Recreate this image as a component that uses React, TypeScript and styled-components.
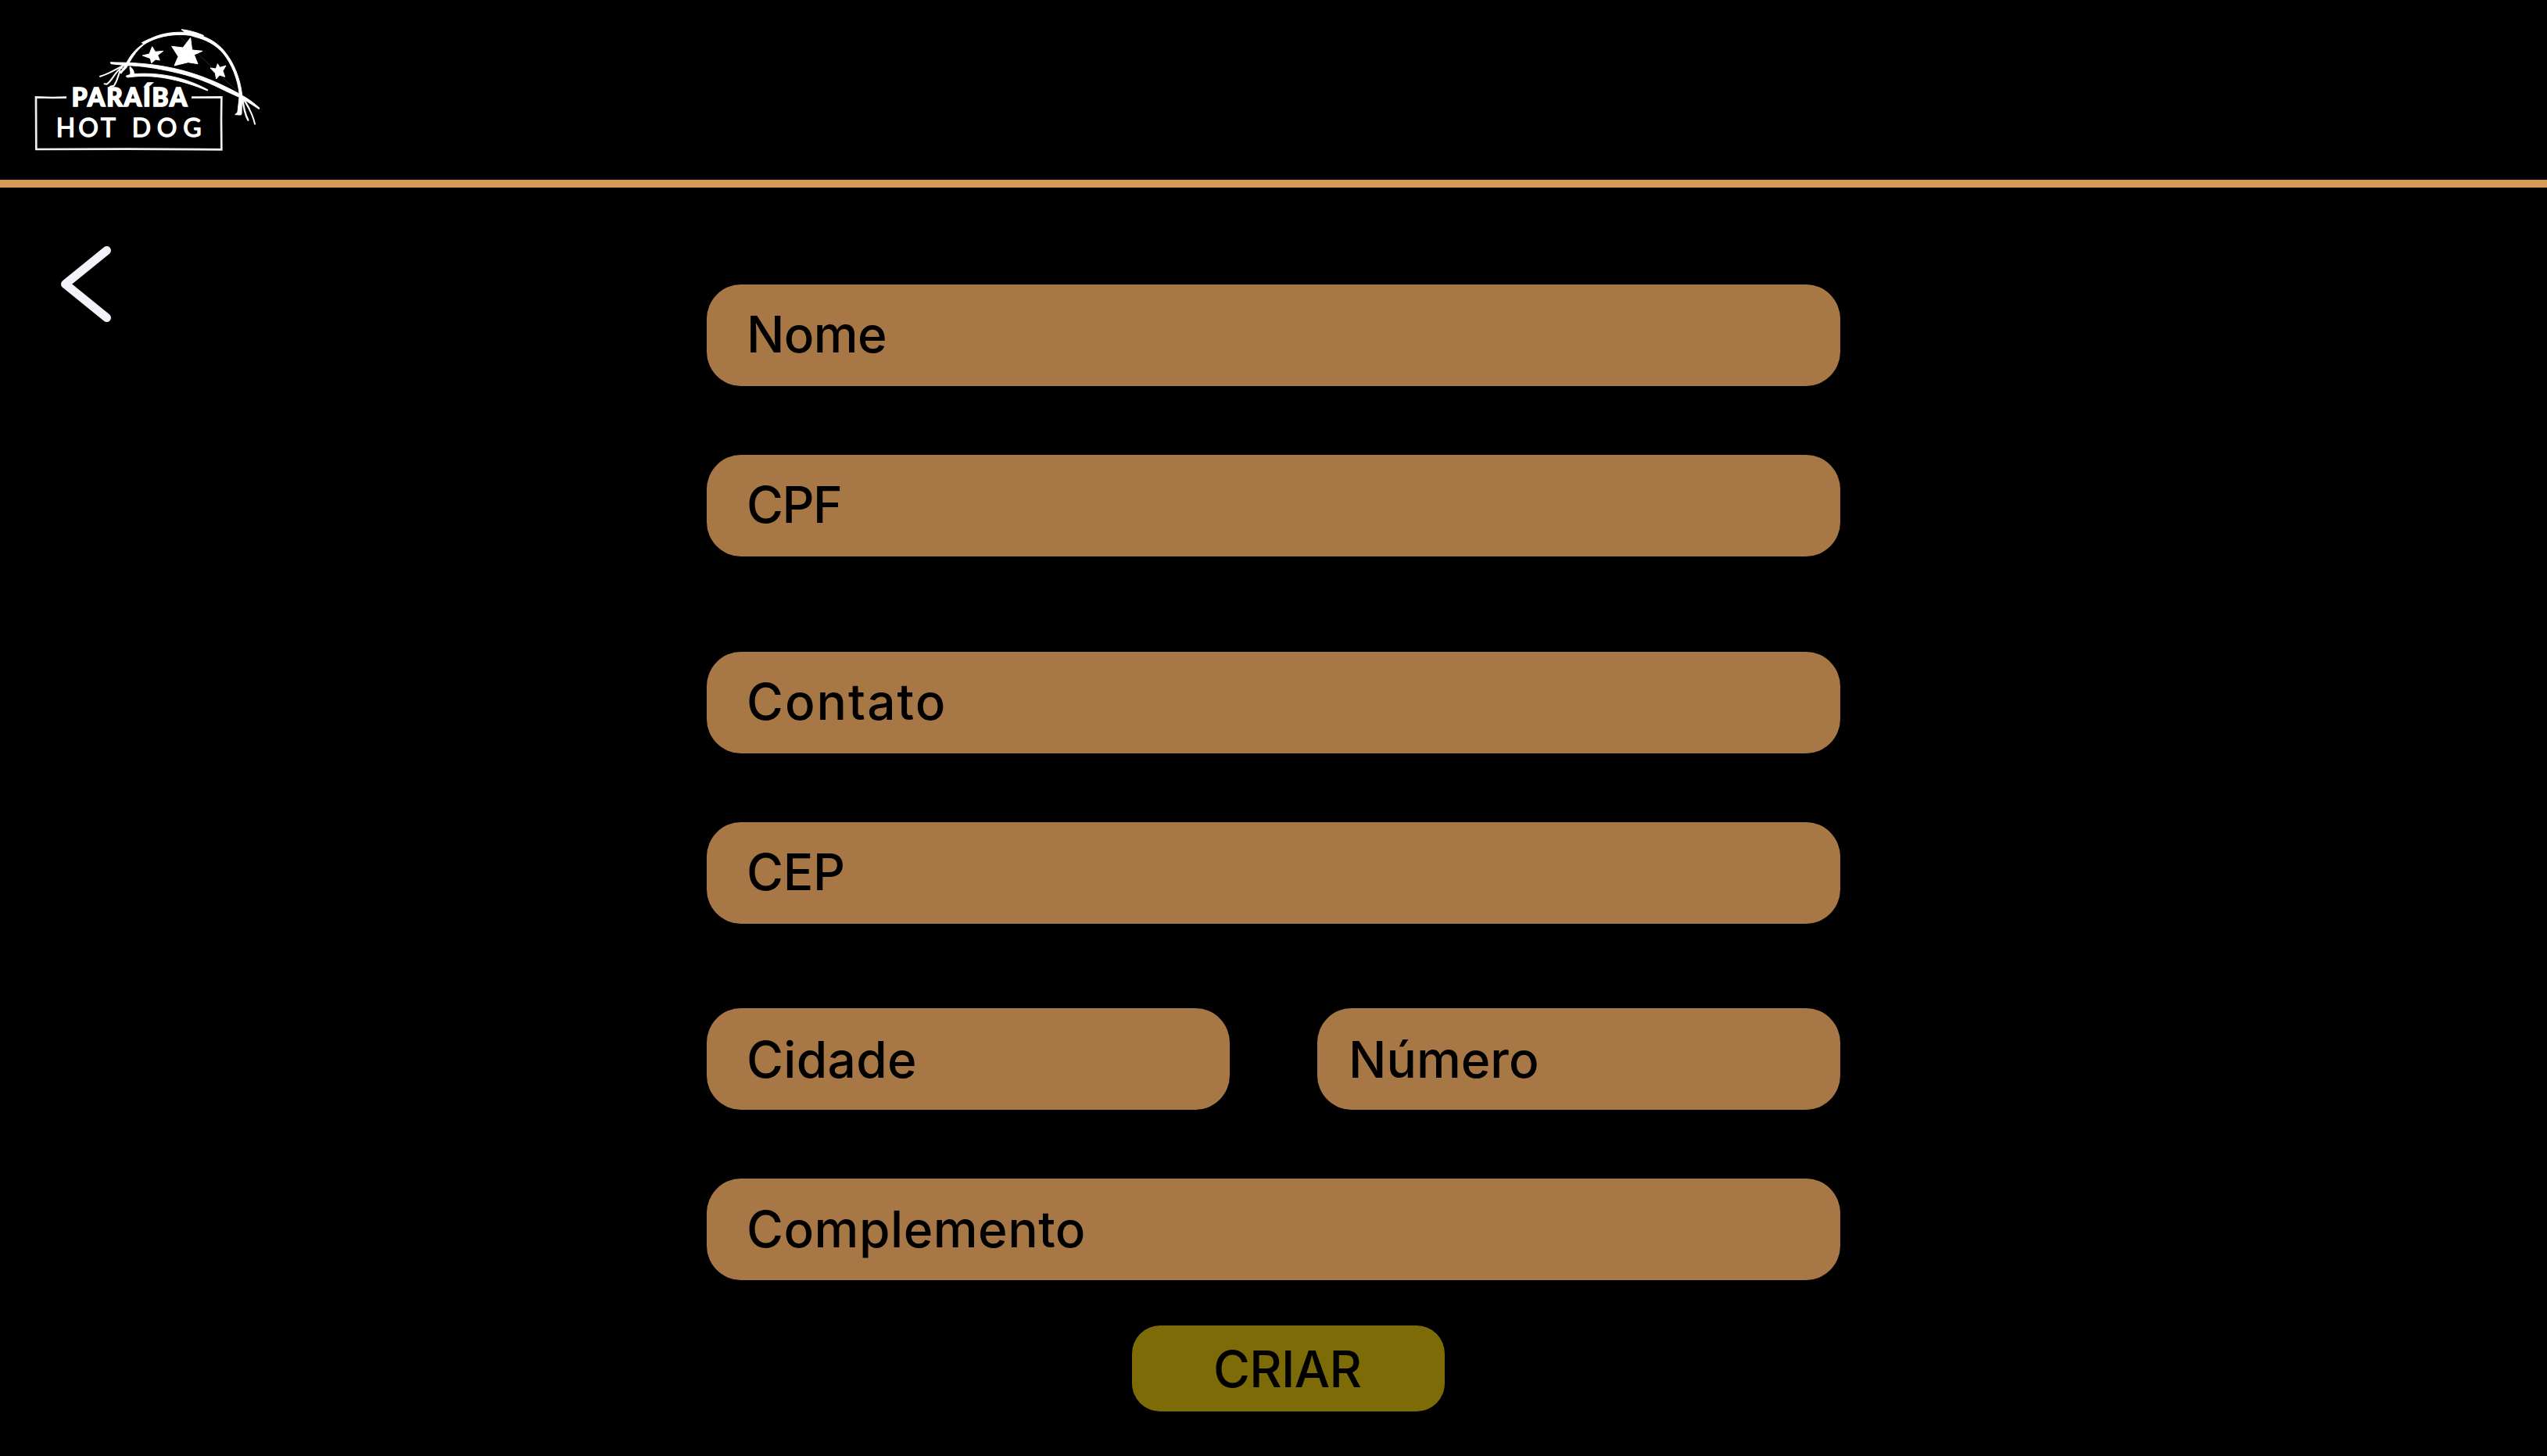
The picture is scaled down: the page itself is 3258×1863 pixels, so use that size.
import React from "react";
import styled, { createGlobalStyle } from "styled-components";

const GlobalStyle = createGlobalStyle`
  *, *::before, *::after { box-sizing: border-box; }
  html, body { margin: 0; background: #000; }
  body { font-family: Inter, "Liberation Sans", sans-serif; }
`;

const Page = styled.div`
  display: flex;
  flex-direction: column;
  width: 3258px;
  height: 1863px;
  background: #000;
  overflow: hidden;
`;

const Header = styled.header`
  flex: none;
  height: 240px;
  padding: 20px 30px 0;
  border-bottom: 10px solid #d69a59;
`;

const LogoArt = styled.svg`
  display: block;
  width: 320px;
  height: 205px;
`;

const Main = styled.main`
  display: grid;
  grid-template-columns: 904px 1450px 904px;
  flex: 1;
`;

const BackButton = styled.button`
  justify-self: start;
  align-self: start;
  margin: 70px 0 0 72px;
  padding: 0;
  border: 0;
  background: none;
  cursor: pointer;

  svg { display: block; }
`;

const Form = styled.form`
  display: flex;
  flex-direction: column;
  padding-top: 124px;
`;

const Row = styled.div<{ $gap: number }>`
  display: flex;
  justify-content: space-between;
  margin-bottom: ${(p) => p.$gap}px;
`;

const Field = styled.label<{ $width?: number; $top: number; $left?: number; $tracking: number }>`
  width: ${(p) => p.$width ?? 1450}px;
  height: 130px;
  padding: ${(p) => p.$top}px 0 0 ${(p) => p.$left ?? 51}px;
  border-radius: 44px;
  background: #a77846;
  color: #000;
  font-size: 64px;
  font-weight: 500;
  line-height: 77px;
  letter-spacing: ${(p) => p.$tracking}px;
  white-space: nowrap;
`;

const SubmitButton = styled.button`
  width: 400px;
  height: 110px;
  margin: 0 0 0 544px;
  padding: 17px 0 16px 104px;
  border: 0;
  border-radius: 36px;
  background: #7d6b07;
  color: #000;
  font-family: inherit;
  font-size: 64px;
  font-weight: 500;
  line-height: 77px;
  letter-spacing: -0.7px;
  text-align: left;
  cursor: pointer;
`;

function Logo() {
  return (
    <LogoArt viewBox="0 0 960 615" role="img" aria-label="Paraíba Hot Dog">
      <g fill="none" stroke="#fff">
        <path d="M165 314 L110 315 L48 313 L49 513 L400 512 L760 514 L759 400 L760 313 L645 314" stroke="#f0f0f0" strokeWidth="8" />
        <path d="M593 73 L830 300" stroke="#2b2b2b" strokeWidth="3" />
      </g>
      <g fill="#fff" stroke="#fff" strokeWidth="3">
        <path d="M374 216 C385 203 391 190 398 177 C415 145 437 122 462 108 L454 104 C469 96 480 91 490 87 C528 69 570 62 620 64 L606 53 C634 56 664 64 691 76 L690 80 C721 91 748 110 768 133 C807 178 832 242 839 305 L837 376 L835 381 L812 380 L822 371 L829 304 C823 246 800 185 765 143 C743 117 710 97 674 86 L640 76 C585 68 525 78 483 99 C451 114 427 143 405 182 C399 195 391 210 374 216 Z" />
        <path d="M334 179 L357 180 C445 180 530 190 605 209 C693 232 770 267 842 308 C862 319 883 334 906 355 L904 359 C885 346 862 332 838 317 C811 306 784 293 755 279 C700 251 640 230 575 216 C508 201 450 192 393 191 L336 185 Z" />
        <path d="M409 195 C421 206 424 214 425 224 C522 217 619 236 708 285 L706 288 C615 250 514 226 426 234 L398 237 L393 232 L410 226 C413 214 406 207 409 195 Z" />
        <path d="M494 119 L506 139 L536 136 L515 152 L523 171 L507 168 L491 182 L487 164 L457 153 L483 147 Z" />
        <path d="M641 85 L647 132 L687 136 L655 150 L669 185 L632 179 L579 192 L594 157 L569 118 L612 123 Z" />
        <path d="M745 185 L754 199 L777 192 L765 212 L773 235 L753 228 L740 243 L736 221 L717 201 L739 204 Z" />
      </g>
      <g fill="none" stroke="#fff" strokeLinecap="round" strokeLinejoin="round">
        <path d="M384 192 C353 205 332 223 294 233" strokeWidth="6" />
        <path d="M378 200 C348 217 346 244 320 263 L311 262" strokeWidth="6" />
        <path d="M371 211 C362 234 359 254 347 269 L333 272" strokeWidth="6" />
        <path d="M391 195 L374 219" strokeWidth="8" />
        <path d="M834 315 L826 376" strokeWidth="11" />
        <path d="M840 313 C844 349 849 377 862 401" strokeWidth="7" />
        <path d="M843 317 C856 342 879 371 888 416" strokeWidth="6" />
        <path d="M843 315 L866 356" strokeWidth="6" />
      </g>
      <g fill="#fff" stroke="#fff" fontFamily="Lato, 'Liberation Sans', sans-serif">
        <text x="185" y="348" fontSize="95" fontWeight="900" textLength="443" strokeWidth="5">
          PARAÍBA
        </text>
        <text x="125" y="464" fontSize="96" fontWeight="400" textLength="229" strokeWidth="4">
          HOT
        </text>
        <text x="416" y="464" fontSize="96" fontWeight="400" textLength="267" strokeWidth="4">
          DOG
        </text>
      </g>
    </LogoArt>
  );
}

export default function App() {
  return (
    <Page>
      <GlobalStyle />
      <Header>
        <Logo />
      </Header>
      <Main>
        <BackButton aria-label="Voltar">
          <svg width="76" height="106" viewBox="0 0 76 106" fill="none">
            <path d="M64.5 10.5 L11.5 53.5 L64.5 96.5" stroke="#f3f1f9" strokeWidth="11" strokeLinecap="round" strokeLinejoin="round" />
          </svg>
        </BackButton>
        <Form>
          <Row $gap={88}>
            <Field $top={25} $tracking={-0.6}>Nome</Field>
          </Row>
          <Row $gap={122}>
            <Field $top={25} $tracking={-1.5}>CPF</Field>
          </Row>
          <Row $gap={88}>
            <Field $top={25} $tracking={2}>Contato</Field>
          </Row>
          <Row $gap={108}>
            <Field $top={25} $tracking={-0.25}>CEP</Field>
          </Row>
          <Row $gap={88}>
            <Field $width={669} $top={27} $tracking={0.3}>Cidade</Field>
            <Field $width={669} $top={27} $left={40} $tracking={0}>Número</Field>
          </Row>
          <Row $gap={58}>
            <Field $top={26} $tracking={0.5}>Complemento</Field>
          </Row>
          <SubmitButton type="button">CRIAR</SubmitButton>
        </Form>
      </Main>
    </Page>
  );
}
